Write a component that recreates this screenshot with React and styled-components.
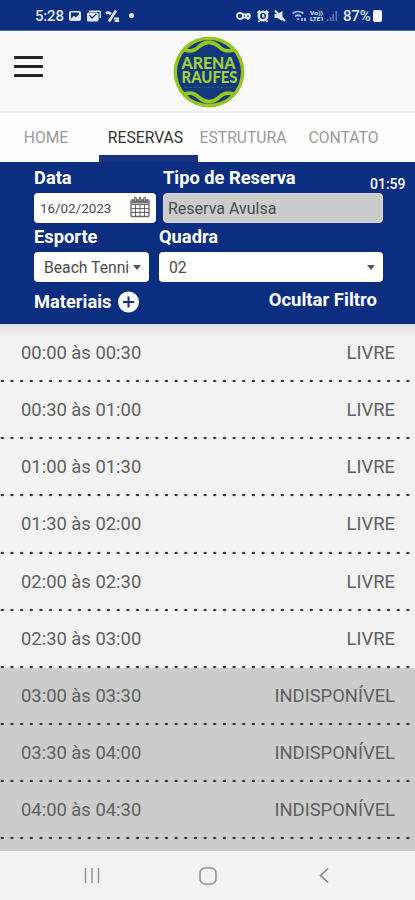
import { useState } from "react";
import styled, { createGlobalStyle } from "styled-components";

const slots = [
  { time: "00:00 às 00:30", free: true },
  { time: "00:30 às 01:00", free: true },
  { time: "01:00 às 01:30", free: true },
  { time: "01:30 às 02:00", free: true },
  { time: "02:00 às 02:30", free: true },
  { time: "02:30 às 03:00", free: true },
  { time: "03:00 às 03:30", free: false },
  { time: "03:30 às 04:00", free: false },
  { time: "04:00 às 04:30", free: false },
];

const tabs = [
  { name: "HOME", space: 7 },
  { name: "RESERVAS", space: 6 },
  { name: "ESTRUTURA", space: 9 },
  { name: "CONTATO", space: 6 },
];

const StatusIcons = () => (
  <svg width="50" height="14" viewBox="0 0 50 14" fill="#dfe8ff">
    <path
      fillRule="evenodd"
      d="M2 2h8q2 0 2 2v6q0 2-2 2H2q-2 0-2-2V4q0-2 2-2zm0 1.6v6.2l3-3 2 1.6 3-3.4V3.6z"
    />
    <path d="M20.5 1.5h10q1.5 0 1.5 1.5v6h-1.4V3h-11z" />
    <path
      fillRule="evenodd"
      d="M19.5 3.5h8.5q1.5 0 1.5 1.5v6q0 1.5-1.5 1.5h-8.500q-1.500 0-1.500-1.500V5q0-1.500 1.500-1.500zM20 6.500l3 3.600 5-5-1-.5-4 3.500-2-2.300z"
    />
    <g fill="none" stroke="#dfe8ff">
      <path d="M47 1.500L40 12.500" strokeWidth="2.6" />
      <path d="M37 4.500q2-2 5 .5" strokeWidth="2.6" />
      <path d="M45 9.500h4.500v2.500h-4" strokeWidth="2" />
    </g>
  </svg>
);

const PhoneIcons = () => (
  <svg width="102" height="15" viewBox="0 0 102 15" fill="#dfe8ff">
    <g fill="none" stroke="#dfe8ff" strokeWidth="1.8">
      <circle cx="4" cy="8" r="3" />
      <path d="M7 6.500h7M7 9.600h7M12 9.500v2.500" />
      <circle cx="12" cy="8" r="2" />
      <circle cx="27" cy="8" r="4.200" strokeWidth="2.6" />
      <path d="M21.500 5l2.500-2.500M32.500 5L30 2.500M23.500 12.500l-1 1.500M30.500 12.500l1 1.500M27 6v2.500h1.500" />
    </g>
    <path d="M38.500 6h3l5-3v10l-5-3h-3z" />
    <path d="M39 2.500l10 10.500" stroke="#dfe8ff" strokeWidth="2" />
    <g fill="none" stroke="#a9bbe8" strokeWidth="1.7">
      <path d="M56.500 5.500q5.500-4 11 0M59 8.500q3-2.500 6 0" />
      <path d="M62 10v2M66 10v3M69 10v3" strokeWidth="1.8" />
    </g>
    <g fontFamily="Roboto, sans-serif" fontSize="5.6" fontWeight="700">
      <text x="74" y="6.6" textLength="13" lengthAdjust="spacingAndGlyphs">
        Vo))
      </text>
      <text x="74" y="13.3" textLength="14" lengthAdjust="spacingAndGlyphs">
        LTE1
      </text>
    </g>
    <g fill="#5e78bd">
      <path d="M91 11h1.500v2H91zM94 9h1.500v4H94zM96.500 6H98v7h-1.500zM99.500 3h1.500v10h-1.500z" />
    </g>
  </svg>
);

const Logo = () => (
  <svg width="72" height="72" viewBox="0 0 72 72">
    <circle cx="36" cy="36" r="35.5" fill="#97c523" />
    <circle cx="36" cy="36" r="32" fill="#12397c" />
    <g fill="none" stroke="#97c523" strokeWidth="3.8" strokeLinecap="round">
      <path d="M12 14Q20 17 26 10.500Q36 2 46 10.500Q52 17 60 14" />
      <path d="M12 58Q20 55 26 61.500Q36 70 46 61.500Q52 55 60 58" />
    </g>
    <g fill="#a3cf3a" fontFamily="Lato, sans-serif" fontWeight="900">
      <text
        x="8.5"
        y="32.8"
        fontSize="16.5"
        textLength="54"
        lengthAdjust="spacingAndGlyphs"
      >
        ARENA
      </text>
      <text
        x="8.5"
        y="47"
        fontSize="16"
        textLength="56"
        lengthAdjust="spacingAndGlyphs"
      >
        RAUFES
      </text>
    </g>
    <path
      d="M12 51.500h48"
      stroke="#557c6c"
      strokeWidth="1.2"
      strokeDasharray="2 2.5"
      opacity=".6"
    />
  </svg>
);

const Calendar = () => (
  <svg width="20" height="22" viewBox="0 0 20 22">
    <g fill="none" stroke="#666" strokeWidth="1.3">
      <rect x="1" y="4" width="18" height="16.5" rx="1" />
      <path
        d="M1 8.500h18M1 12.500h18M1 16.500h18M5.500 8v12.500M10 8v12.500M14.500 8v12.500"
        strokeWidth="1"
      />
    </g>
    <path d="M1 4h18v3.500H1z" fill="#777" />
    <path
      d="M5.500 2v3M10 2v3M14.500 2v3"
      stroke="#555"
      strokeWidth="2.4"
      strokeLinecap="round"
    />
    <path d="M5.500 2v3M10 2v3M14.500 2v3" stroke="#ddd" strokeWidth=".8" />
  </svg>
);

const App = () => {
  const [active, setActive] = useState("RESERVAS");

  return (
    <Phone>
      <GlobalStyle />
      <StatusBar>
        <Clock>5:28</Clock>
        <StatusIcons />
        <Dot />
        <StatusRight>
          <PhoneIcons />
          <Percent>87%</Percent>
          <Battery />
        </StatusRight>
      </StatusBar>
      <Header>
        <Burger aria-label="Menu">
          <span />
          <span />
          <span />
        </Burger>
        <Logo />
      </Header>
      <Nav>
        {tabs.map((tab) => (
          <Tab
            key={tab.name}
            $active={tab.name === active}
            $space={tab.space}
            onClick={() => setActive(tab.name)}
          >
            {tab.name}
          </Tab>
        ))}
      </Nav>
      <Filter>
        <FieldRow>
          <Field $width={121.5}>
            <Label>Data</Label>
            <Box $kind="date">
              16/02/2023
              <Calendar />
            </Box>
          </Field>
          <Field $width={220}>
            <Label>Tipo de Reserva</Label>
            <Box $kind="disabled">Reserva Avulsa</Box>
          </Field>
          <Timer>01:59</Timer>
        </FieldRow>
        <FieldRow $second>
          <Field $width={114.5}>
            <Label>Esporte</Label>
            <Box>
              Beach Tenni
              <Caret />
            </Box>
          </Field>
          <Field $width={224}>
            <Label>Quadra</Label>
            <Box>
              02
              <Caret />
            </Box>
          </Field>
        </FieldRow>
        <Actions>
          <Materials>
            Materiais
            <svg width="21" height="22" viewBox="0 0 21 22">
              <circle cx="10.5" cy="11" r="10.5" fill="#fff" />
              <path d="M5 11h11M10.500 5.500v11" stroke="#0c2e80" strokeWidth="2" />
            </svg>
          </Materials>
          <Hide>Ocultar Filtro</Hide>
        </Actions>
      </Filter>
      <List>
        {slots.map((slot) => (
          <Slot key={slot.time} $free={slot.free}>
            <p>{slot.time}</p>
            <p>{slot.free ? "LIVRE" : "INDISPONÍVEL"}</p>
          </Slot>
        ))}
      </List>
      <AndroidNav>
        <svg width="16" height="17" viewBox="0 0 16 17">
          <path
            d="M1.500 1v15M8 1v15M14.500 1v15"
            stroke="#929292"
            strokeWidth="1.5"
          />
        </svg>
        <svg width="18" height="18" viewBox="0 0 18 18">
          <rect
            x="1"
            y="1"
            width="16"
            height="16"
            rx="5"
            fill="none"
            stroke="#929292"
            strokeWidth="1.6"
          />
        </svg>
        <svg width="10" height="17" viewBox="0 0 10 17">
          <path
            d="M9 1.500L1.500 8.500L9 15.500"
            fill="none"
            stroke="#858585"
            strokeWidth="1.6"
          />
        </svg>
      </AndroidNav>
    </Phone>
  );
};

const GlobalStyle = createGlobalStyle`
  * {
    box-sizing: border-box;
    margin: 0;
    padding: 0;
  }
  body {
    font-family: Roboto, sans-serif;
    background-color: #f2f2f2;
  }
  svg {
    display: block;
    flex-shrink: 0;
  }
`;

const Phone = styled.div`
  width: 415px;
  height: 900px;
  display: flex;
  flex-direction: column;
  overflow: hidden;
`;

const StatusBar = styled.div`
  height: 31px;
  flex-shrink: 0;
  padding: 1px 33px 0 35px;
  display: flex;
  align-items: center;
  background-color: #0b2e81;
  border-bottom: solid 1px #5362a5;
  color: #dfe8ff;
`;

const Clock = styled.p`
  width: 34px;
  font-size: 15px;
  font-weight: 500;
  letter-spacing: -0.2px;
`;

const Dot = styled.span`
  width: 5px;
  height: 5px;
  margin-left: 10px;
  border-radius: 50%;
  background-color: #dfe8ff;
`;

const StatusRight = styled.div`
  margin-left: auto;
  display: flex;
  align-items: center;
`;

const Percent = styled.p`
  margin-left: 5px;
  width: 30px;
  font-size: 15px;
  font-weight: 500;
  letter-spacing: -0.2px;
`;

const Battery = styled.span`
  width: 9px;
  height: 12px;
  border-radius: 2px;
  background-color: #f4f7ff;
`;

const Header = styled.header`
  height: 82px;
  flex-shrink: 0;
  padding: 5px 0 0 14px;
  display: flex;
  align-items: flex-start;
  gap: 129px;
  background-color: #f8f8f8;
  border-bottom: solid 2px #eeeeee;
`;

const Burger = styled.button`
  width: 30px;
  margin-top: 20px;
  display: flex;
  flex-direction: column;
  gap: 6px;
  border: none;
  background: none;
  span {
    height: 3px;
    width: 29px;
    border-radius: 1px;
    background-color: #222;
  }
`;

const Nav = styled.nav`
  height: 49px;
  flex-shrink: 0;
  display: flex;
  background-color: #fefefe;
`;

const Tab = styled.button`
  width: 99px;
  padding: 6px ${({ $space }) => $space}px 0 0;
  border: none;
  border-bottom: solid 7px
    ${({ $active }) => ($active ? "#1a3380" : "transparent")};
  background: none;
  font-family: inherit;
  font-size: 15.7px;
  text-align: center;
  white-space: nowrap;
  color: ${({ $active }) => ($active ? "#333" : "#999")};
`;

const Filter = styled.section`
  height: 162px;
  flex-shrink: 0;
  padding: 3px 10px 0 34px;
  background-color: #0c2e80;
  color: #fff;
`;

const FieldRow = styled.div`
  height: ${({ $second }) => ($second ? 59 : 58)}px;
  display: flex;
  gap: ${({ $second }) => ($second ? 10.5 : 7.5)}px;
  margin-top: ${({ $second }) => ($second ? 1 : 0)}px;
`;

const Field = styled.div`
  width: ${({ $width }) => $width}px;
  flex-shrink: 0;
`;

const Label = styled.p`
  height: 28px;
  line-height: 25px;
  font-size: 18.3px;
  font-weight: 700;
`;

const Box = styled.div`
  height: 30px;
  display: flex;
  align-items: center;
  justify-content: space-between;
  padding: 1px ${({ $kind }) => ($kind === "date" ? "6px 0 6px" : "8px 0 10px")};
  border-radius: 4px;
  font-size: ${({ $kind }) => ($kind === "date" ? 13.4 : 15.7)}px;
  white-space: nowrap;
  color: #4a4a4a;
  background-color: #fff;
  svg {
    margin-bottom: 4px;
  }
  ${({ $kind }) =>
    $kind === "disabled" &&
    `
    padding-left: 4px;
    font-size: 16px;
    background-color: #cccccc;
    border: solid 1px #d8dbe0;
  `}
`;

const Caret = styled.span`
  border-left: solid 4.5px transparent;
  border-right: solid 4.5px transparent;
  border-top: solid 5px #555;
`;

/* sits beside the row, above the end of the last box */
const Timer = styled.p`
  margin: 11px 0 0 -20.5px;
  font-size: 14px;
  font-weight: 500;
`;

const Actions = styled.div`
  padding-right: 28px;
  display: flex;
  justify-content: space-between;
  font-size: 18.3px;
  font-weight: 700;
`;

const Materials = styled.div`
  height: 37px;
  display: flex;
  align-items: center;
  gap: 7px;
`;

const Hide = styled.p`
  line-height: 34px;
  font-size: 18.5px;
`;

const List = styled.main`
  flex: 1;
  padding-top: 2px;
  overflow: hidden;
  background: linear-gradient(#dedede, #f2f2f2 12px, #f2f2f2 344px, #cccccc 344px);
`;

const Slot = styled.div`
  height: 57.13px;
  padding: 0 20px 0 21px;
  display: flex;
  justify-content: space-between;
  line-height: 54px;
  font-size: 18.4px;
  color: #606060;
  background: radial-gradient(
        ellipse 2.1px 1.6px at 2.3px 50%,
        #333 55%,
        transparent
      )
      0 100% / 9.67px 4px repeat-x,
    ${({ $free }) => ($free ? "transparent" : "#cccccc")};
`;

const AndroidNav = styled.footer`
  height: 49px;
  flex-shrink: 0;
  padding: 0 86px 0 84px;
  display: grid;
  grid-template-columns: 115px 1fr auto;
  align-items: center;
  background-color: #f2f2f2;
`;

export default App;
